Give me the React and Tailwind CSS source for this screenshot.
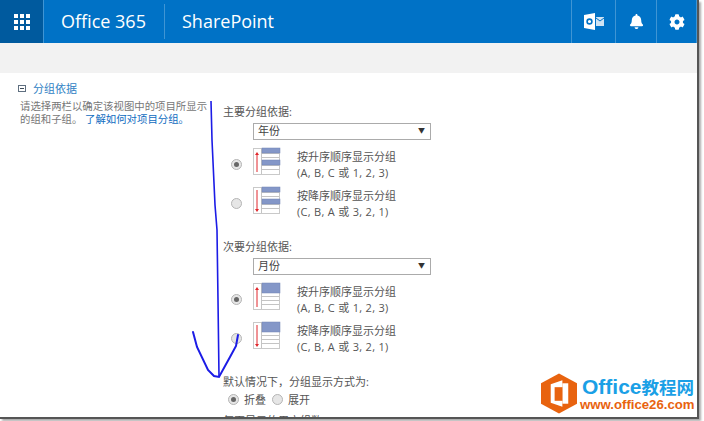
import { FaBell, FaCog } from "react-icons/fa";

const cjk = { fontFamily: '"Open Sans", "Noto Sans CJK SC", sans-serif' };

function Radio({ checked }) {
  return (
    <span className="flex items-center justify-center w-[11px] h-[11px] shrink-0 rounded-full border border-[#b5b5b5] bg-[#e6e6e6]">
      {checked && <span className="w-[5px] h-[5px] rounded-full bg-[#666]" />}
    </span>
  );
}

// table with coloured group rows and a red sort arrow
function SortIcon({ primary, desc }) {
  return (
    <svg width="28" height="28" viewBox="0 0 28 28" className="shrink-0">
      <rect x="0.5" y="1.5" width="26" height="26" fill="#fff" stroke="#c9c9c9" />
      {[6, 10, 14, 18, 22].map((y) => (
        <line key={y} x1="8" x2="26" y1={y + 0.5} y2={y + 0.5} stroke="#c4c4c4" />
      ))}
      <line x1="8.5" x2="8.5" y1="1" y2="27" stroke="#c4c4c4" />
      <rect x="9" y="1" width="18" height={primary ? 5 : 10} fill="#8497c8" stroke="#7284b5" strokeWidth="0.5" />
      {primary && <rect x="9" y="13" width="18" height="5" fill="#8497c8" stroke="#7284b5" strokeWidth="0.5" />}
      <line x1="4" x2="4" y1={desc ? 4 : 7} y2={desc ? 24 : 25} stroke="#e0272c" strokeWidth="1" />
      {desc ? <path d="M2 23h4l-2 3z" fill="#e0272c" /> : <path d="M2 8h4L4 5z" fill="#e0272c" />}
    </svg>
  );
}

function SortOption({ primary, desc }) {
  return (
    <div className="flex items-start h-[28px]">
      <div className="w-[30px] pl-[8px] pt-[12px]">
        <Radio checked={!desc} />
      </div>
      <SortIcon primary={primary} desc={desc} />
      <div className="ml-[16px] mt-[2px] text-[11px] leading-[15.5px] text-[#555]">
        <div>{desc ? "按降序顺序显示分组" : "按升序顺序显示分组"}</div>
        <div className="tracking-[0.3px]">{desc ? "(C, B, A 或 3, 2, 1)" : "(A, B, C 或 1, 2, 3)"}</div>
      </div>
    </div>
  );
}

function GroupBlock({ label, value, primary }) {
  return (
    <div>
      <div className="text-[11px] leading-[15px] text-[#555]">{label}</div>
      <div className="ml-[30px] mt-[4px] w-[178px] h-[17px] border border-[#ababab] flex items-center justify-between pl-[4px] pr-[5px] text-[11px] text-[#444]">
        <span>{value}</span>
        <span className="text-[7px] text-[#333]">▼</span>
      </div>
      <div className="mt-[7px] flex flex-col gap-[11px]">
        <SortOption primary={primary} />
        <SortOption primary={primary} desc />
      </div>
    </div>
  );
}

export default function App() {
  return (
    <div className="relative w-[704px] h-[421px] overflow-hidden bg-white" style={cjk}>
      <div className="w-[699px] h-[419px] border-r-2 border-b-2 border-[#555] overflow-hidden shadow-[2px_2px_2px_#aaa]">
        {/* suite bar */}
        <header className="flex h-[43px] bg-[#0072c6] text-white">
          <div className="w-[44px] bg-[#005a9e] border-r border-[#3f95d4] flex items-center justify-center">
            <div className="grid grid-cols-3 gap-[2px]">
              {Array.from({ length: 9 }).map((_, i) => (
                <span key={i} className="w-[4px] h-[4px] bg-white" />
              ))}
            </div>
          </div>
          <div className="w-[120px] pl-[17px] flex items-center text-[18px]">
            <span>Office 365</span>
          </div>
          <div className="w-px h-[35px] mt-[4px] bg-[#3f95d4]" />
          <div className="flex-1 pl-[17px] flex items-center text-[18px]">SharePoint</div>
          <div className="w-[44px] border-l border-[#3f95d4] flex items-center justify-center">
            <svg width="20" height="17" viewBox="0 0 20 17">
              <path d="M0 2 11 0v17L0 15z" fill="#fff" />
              <circle cx="5.5" cy="8.5" r="2.4" fill="none" stroke="#0072c6" strokeWidth="1.6" />
              <rect x="12" y="4" width="8" height="9" fill="#cfe3f3" />
              <path d="m12 5 4 3 4-3" fill="none" stroke="#0072c6" />
            </svg>
          </div>
          <div className="w-[41px] border-l border-[#3f95d4] flex items-center justify-center">
            <FaBell size={15} />
          </div>
          <div className="w-[41px] border-x border-[#3f95d4] flex items-center justify-center">
            <FaCog size={16} />
          </div>
        </header>

        <div className="h-[30px] bg-[#f2f2f2]" />

        {/* form section */}
        <div className="flex">
          <aside className="w-[223px] pl-[18px] pt-[8px] shrink-0">
            <div className="flex items-center gap-[7px] text-[11px] leading-[15px] text-[#2f7fc4]">
              <span className="w-[8px] h-[7px] border border-[#5f6f80] flex items-center justify-center">
                <span className="w-[4px] h-px bg-[#3d4b5a]" />
              </span>
              分组依据
            </div>
            <p className="mt-[4px] ml-[2px] w-[190px] text-[10.4px] leading-[13px] text-[#777]">
              请选择两栏以确定该视图中的项目所显示的组和子组。 <span className="text-[#0f6cbf]">了解如何对项目分组。</span>
            </p>
          </aside>

          <main className="pt-[31px] flex-1">
            <GroupBlock label="主要分组依据:" value="年份" primary />
            <div className="mt-[25px]">
              <GroupBlock label="次要分组依据:" value="月份" />
            </div>
            <div className="mt-[25px] text-[11px] leading-[15px] text-[#555]">默认情况下，分组显示方式为:</div>
            <div className="mt-[3px] ml-[5px] flex items-center text-[11px] leading-[15px] text-[#555]">
              <Radio checked />
              <span className="ml-[5px]">折叠</span>
              <span className="ml-[6px]">
                <Radio />
              </span>
              <span className="ml-[5px]">展开</span>
            </div>
            <div className="mt-[6px] text-[11px] leading-[15px] text-[#555]">每页显示的用户组数</div>
          </main>
        </div>
      </div>

      {/* hand-drawn arrow */}
      <svg className="absolute left-0 top-0 pointer-events-none" width="704" height="421" viewBox="0 0 704 421" fill="none">
        <path d="M211 101 212 140 215 205 217 230 218 300 219 377" stroke="#1c1ce6" strokeWidth="1.6" />
        <path d="M193 332 197 347 208 370 214 376 219 377 230 357 236 346 238 335" stroke="#1c1ce6" strokeWidth="2" strokeLinecap="round" />
      </svg>

      {/* watermark */}
      <div className="absolute left-[541px] top-[372px] flex items-start">
        <svg width="36" height="43" viewBox="0 0 37 41">
          <path d="M18.5 0 37 10v21L18.5 41 0 31V10z" fill="#e8630f" />
          <path d="M10 11 22 7v27l-12-4z" fill="#fff" />
          <path d="M22 10h6v21h-6z" fill="#fff" />
          <path d="M14 14h8v14h-8z" fill="#e8630f" />
        </svg>
        <div className="ml-[5px] pt-[4px]">
          <div className="h-[22px] flex items-baseline text-[21px] leading-[22px] font-bold text-[#1aa0e6] whitespace-nowrap" style={{ fontFamily: '"Liberation Sans", "Noto Sans CJK SC", sans-serif' }}>
            Office<span className="text-[17.5px]">教程网</span>
          </div>
          <div className="-ml-[2px] text-[13.2px] leading-[13px] font-bold text-[#e8630f] whitespace-nowrap" style={{ fontFamily: '"Liberation Sans", sans-serif' }}>www.office26.com</div>
        </div>
      </div>
    </div>
  );
}
